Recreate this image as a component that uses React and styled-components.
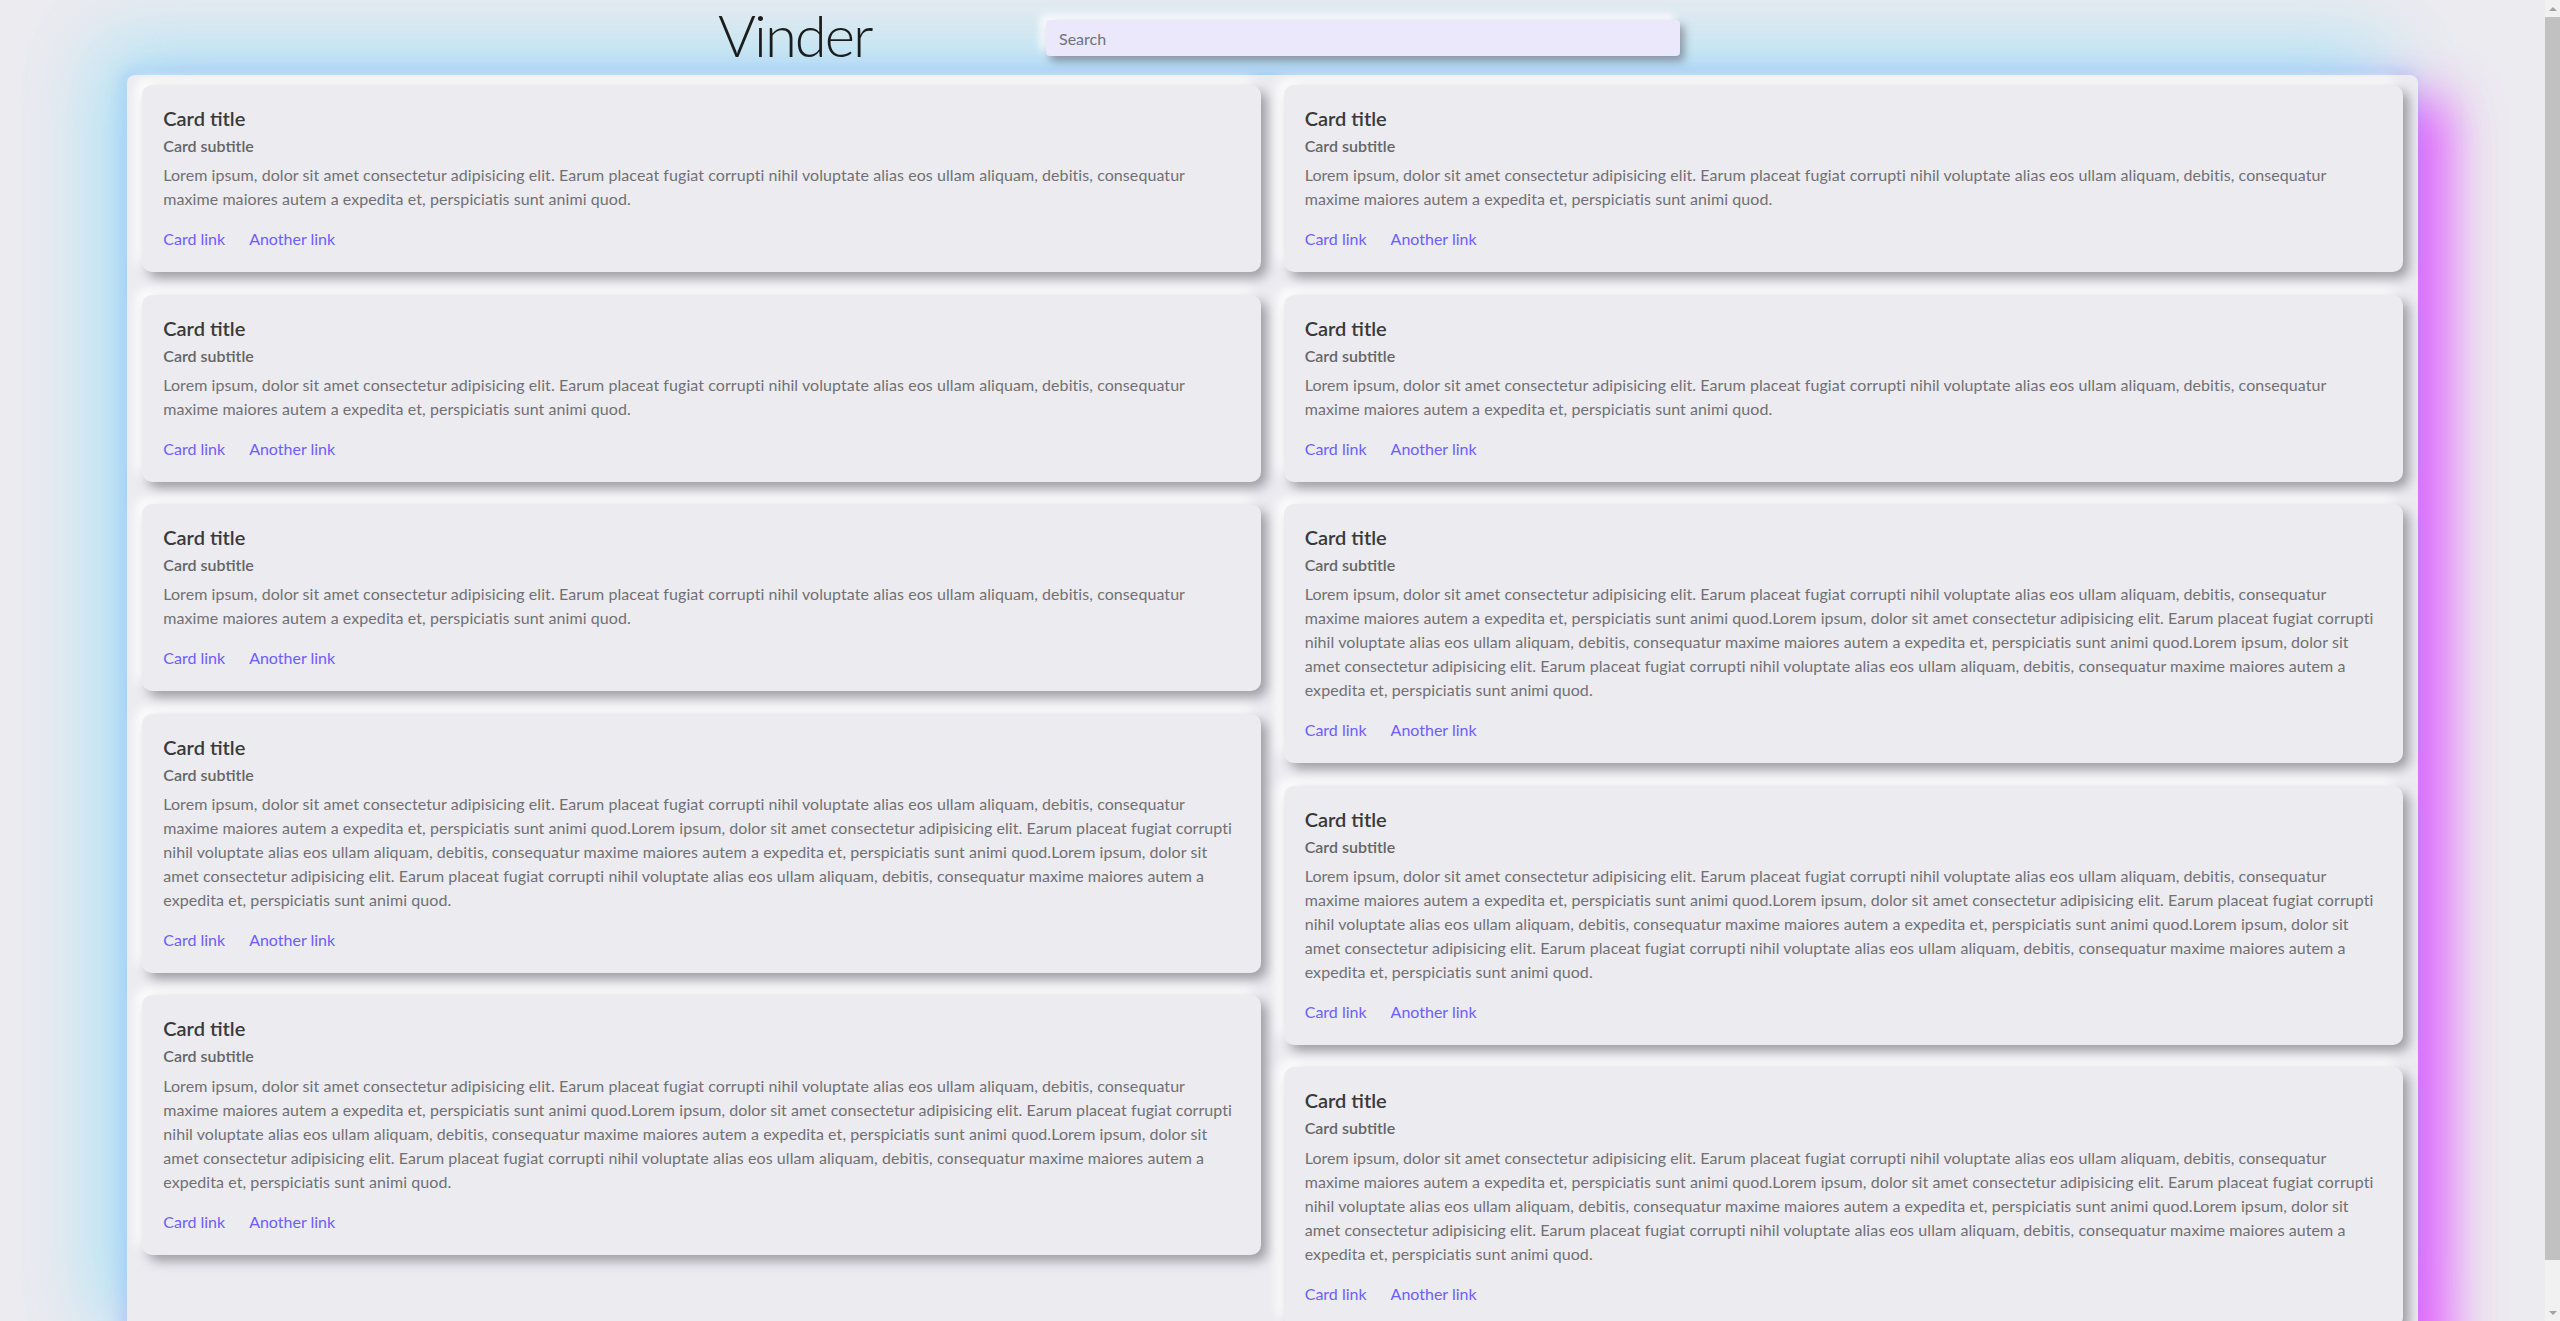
import React, { useMemo } from 'react';
import styled, { createGlobalStyle } from 'styled-components';

const GlobalStyle = createGlobalStyle`
  html, body { margin: 0; height: 100%; overflow: hidden; }
  body {
    background: #ecebf0;
    font-family: Lato, "Liberation Sans", sans-serif;
  }
`;

const Shell = styled.div`
  display: flex;
  height: 100vh;
  overflow: hidden;
  background: #ecebf0;
`;

const Viewport = styled.div`
  flex: 1;
  min-width: 0;
  overflow-y: auto;
  overflow-x: hidden;
  scrollbar-width: none;
  &::-webkit-scrollbar { display: none; }
`;

const Rail = styled.div`
  flex: 0 0 15px;
  display: flex;
  flex-direction: column;
  background: #f1f1f1;
`;

const RailButton = styled.div`
  flex: 0 0 17px;
  display: flex;
  align-items: center;
  justify-content: center;
`;

const Arrow = styled.span`
  width: 0;
  height: 0;
  border-left: 4px solid transparent;
  border-right: 4px solid transparent;
  ${(p) => (p.$down ? 'border-top: 4px solid #a3a3a3;' : 'border-bottom: 4px solid #a3a3a3;')}
`;

const Thumb = styled.div`
  flex: 0 0 1243px;
  background: #c1c1c1;
`;

const RailSpace = styled.div`
  flex: 1;
`;

const Header = styled.header`
  display: flex;
  align-items: flex-start;
  height: 75px;
  box-sizing: border-box;
  padding-left: 718px;
`;

const Brand = styled.h1`
  flex: 0 0 328px;
  margin: 0;
  font-family: Lato, sans-serif;
  font-weight: 300;
  font-size: 58px;
  line-height: 1.2;
  letter-spacing: -2px;
  color: #1c1c1c;
`;

const SearchInput = styled.input`
  width: 634px;
  height: 36px;
  margin-top: 20px;
  box-sizing: border-box;
  border: none;
  border-radius: 4px;
  padding: 0 13px;
  background: #eae8fa;
  font-family: Lato, sans-serif;
  font-size: 16px;
  color: #495057;
  outline: none;
  box-shadow: 4px 5px 8px rgba(70, 70, 80, 0.5), -5px -5px 10px #ffffff;
  &::placeholder { color: #6f7378; }
`;

const Board = styled.main`
  width: 90%;
  margin: 0 auto 10px;
  box-sizing: border-box;
  padding: 10px 15px 32px;
  background: #ecebf0;
  border-radius: 8px;
  display: grid;
  grid-template-columns: 1fr 1fr;
  column-gap: 22.4px;
  align-items: start;
  box-shadow:
    -30px -30px 80px rgba(120, 220, 250, 0.6),
    -4px -4px 16px rgba(135, 160, 255, 0.35),
    30px 24px 50px rgba(232, 60, 255, 0.85);
`;

const Column = styled.div`
  display: flex;
  flex-direction: column;
  gap: 22.4px;
  min-width: 0;
`;

const Card = styled.article`
  background: #ecebf0;
  border-radius: 10px;
  padding: 21px;
  box-shadow: 6px 6px 12px #9c9ca1, -6px -6px 12px #ffffff;
`;

const Title = styled.h5`
  margin: 0 0 6px;
  font-size: 20px;
  font-weight: 600;
  line-height: 24px;
  color: #393939;
`;

const Subtitle = styled.h6`
  margin: 0 0 8px;
  font-size: 16px;
  font-weight: 600;
  line-height: 19.2px;
  color: #656565;
`;

const Text = styled.p`
  margin: 0 0 16px;
  font-size: 16px;
  line-height: 24px;
  color: #707073;
  letter-spacing: var(--text-ls, 0px);
`;

const Links = styled.div`
  display: flex;
  gap: 24px;
  line-height: 24px;
  font-size: 16px;
`;

const CardLink = styled.a`
  color: #6c5dff;
  text-decoration: none;
  cursor: pointer;
`;

const BASE =
  'Lorem ipsum, dolor sit amet consectetur adipisicing elit. Earum placeat fugiat corrupti nihil voluptate alias eos ullam aliquam, debitis, consequatur maxime maiores autem a expedita et, perspiciatis sunt animi quod.';
const LONG = BASE + BASE + BASE;

const LEFT = [BASE, BASE, BASE, LONG, LONG];
const RIGHT = [BASE, BASE, LONG, LONG, LONG];

function useTextSpacing() {
  return useMemo(() => {
    try {
      const ctx = document.createElement('canvas').getContext('2d');
      ctx.font = '400 16px Lato';
      const l1 = 'Lorem ipsum, dolor sit amet consectetur adipisicing elit. Earum placeat fugiat corrupti nihil voluptate alias eos ullam aliquam, debitis, consequatur';
      const l1x = l1 + ' maxime';
      const l2 = 'maxime maiores autem a expedita et, perspiciatis sunt animi quod.Lorem ipsum, dolor sit amet consectetur adipisicing elit. Earum placeat fugiat corrupti';
      const l3x = 'nihil voluptate alias eos ullam aliquam, debitis, consequatur maxime maiores autem a expedita et, perspiciatis sunt animi quod.Lorem ipsum, dolor sit amet';
      const m = (s) => ctx.measureText(s).width;
      const target = (1026 - m(l1)) / l1.length;
      const lsMax = (1070 - m(l2)) / l2.length;
      const lsMin = Math.max((1088 - m(l1x)) / l1x.length, (1088 - m(l3x)) / l3x.length);
      let ls = Math.min(lsMax, Math.max(lsMin, target));
      if (!isFinite(ls)) ls = 0;
      return ls;
    } catch (e) {
      return 0;
    }
  }, []);
}

function InfoCard({ text }) {
  return (
    <Card>
      <Title>Card title</Title>
      <Subtitle>Card subtitle</Subtitle>
      <Text>{text}</Text>
      <Links>
        <CardLink href="#">Card link</CardLink>
        <CardLink href="#">Another link</CardLink>
      </Links>
    </Card>
  );
}

export default function App() {
  const ls = useTextSpacing();
  return (
    <Shell>
      <GlobalStyle />
      <Viewport>
        <Header>
          <Brand>Vinder</Brand>
          <SearchInput type="text" placeholder="Search" />
        </Header>
        <Board style={{ '--text-ls': `${ls.toFixed(3)}px` }}>
          <Column>
            {LEFT.map((t, i) => (
              <InfoCard key={i} text={t} />
            ))}
          </Column>
          <Column>
            {RIGHT.map((t, i) => (
              <InfoCard key={i} text={t} />
            ))}
          </Column>
        </Board>
      </Viewport>
      <Rail>
        <RailButton><Arrow /></RailButton>
        <Thumb />
        <RailSpace />
        <RailButton><Arrow $down /></RailButton>
      </Rail>
    </Shell>
  );
}
